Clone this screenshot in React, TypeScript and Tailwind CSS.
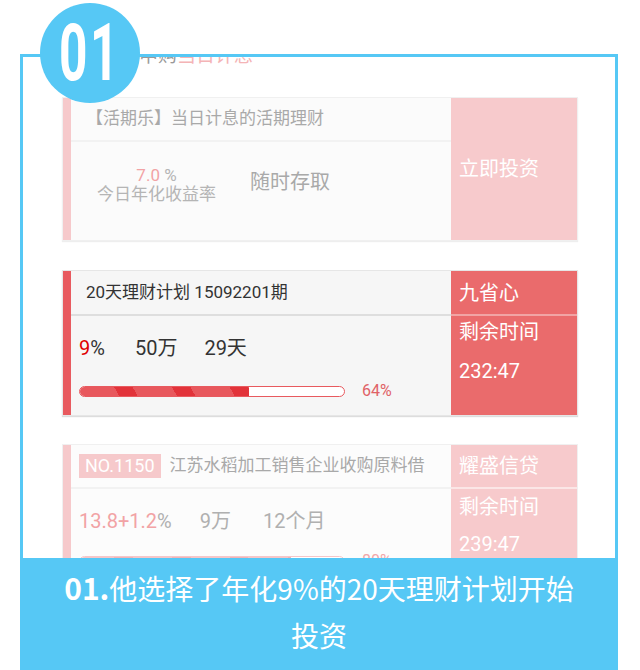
import React from 'react';

const font = { fontFamily: 'Roboto, "Noto Sans CJK SC", sans-serif' };

function Progress({ pct, tone }: { pct: number; tone: 'red' | 'pink' }) {
  const border = tone === 'red' ? 'border-[#e85a5f]' : 'border-[#f6c6c8]';
  const fill =
    tone === 'red'
      ? 'bg-[repeating-linear-gradient(60deg,#e8585d_0px,#e8585d_34px,#e2333a_34px,#e2333a_50px)]'
      : 'bg-[repeating-linear-gradient(60deg,#f6c6c8_0px,#f6c6c8_34px,#f2b4b7_34px,#f2b4b7_50px)]';
  return (
    <div className="flex items-center">
      <div className={`w-[266px] h-[11px] rounded-full border ${border} bg-white overflow-hidden`}>
        <div className={`h-full ${fill}`} style={{ width: `${pct}%` }} />
      </div>
      <span className={`ml-[17px] text-[16px] leading-none ${tone === 'red' ? 'text-[#e06266]' : 'text-[#f2a7a9]'}`}>
        {pct}%
      </span>
    </div>
  );
}

export default function App() {
  return (
    <div className="relative w-[640px] h-[670px] overflow-hidden bg-white flex flex-col" style={font}>
      <div className="h-[54px] shrink-0" />

      {/* frame */}
      <div className="mx-[20px] w-[598px] h-[504px] shrink-0 border-t-[3px] border-x-[3px] border-[#56c8f5] overflow-hidden">
        <div className="ml-[40px] mt-[-11px] h-[19px] text-[19px] leading-[19px] whitespace-nowrap">
          <span className="text-[#999]">支持随时申购</span>
          <span className="text-[#f4b4b6]">当日计息</span>
        </div>

        {/* card 1 */}
        <div className="ml-[39px] mt-[32px] w-[516px] h-[144px] flex border border-[#f0f0f0] shadow-[0_1px_1px_#eee]">
          <div className="w-[8px] bg-[#f6c9cb]" />
          <div className="w-[380px] bg-[#fbfbfb] flex flex-col">
            <div className="h-[44px] border-b-2 border-[#f2f2f2] flex items-center pl-[15px] text-[17px] text-[#a9a9a9]">
              【活期乐】当日计息的活期理财
            </div>
            <div className="flex-1 flex items-center">
              <div className="ml-[26px] flex flex-col items-center text-[17px] leading-[19px] text-[#b5b5b5] mt-[-12px]">
                <div>
                  <span className="text-[#f2a3a5]">7.0</span> %
                </div>
                <div className="whitespace-nowrap">今日年化收益率</div>
              </div>
              <div className="ml-[34px] text-[20px] text-[#a9a9a9] mt-[-18px]">随时存取</div>
            </div>
          </div>
          <div className="flex-1 bg-[#f7cacc] flex items-center pl-[8px] text-[20px] text-white">立即投资</div>
        </div>

        {/* card 2 */}
        <div className="ml-[39px] mt-[29px] w-[516px] h-[146px] flex border border-[#e6e6e6] shadow-[0_1px_1px_#ddd]">
          <div className="w-[8px] bg-[#e85a5f]" />
          <div className="w-[380px] bg-[#f6f6f6] flex flex-col">
            <div className="h-[45px] border-b-2 border-[#dedede] flex items-center pl-[15px] text-[17px] text-[#333]">
              20天理财计划 15092201期
            </div>
            <div className="flex-1 pl-[8px] pt-[20px]">
              <div className="flex items-center text-[20px] leading-[24px] text-[#333]">
                <span>
                  <span className="text-[#e00000]">9</span>%
                </span>
                <span className="ml-[30px]">50万</span>
                <span className="ml-[27px]">29天</span>
              </div>
              <div className="mt-[23px]">
                <Progress pct={64} tone="red" />
              </div>
            </div>
          </div>
          <div className="flex-1 bg-[#ea6b6c] flex flex-col text-[20px] text-white">
            <div className="h-[45px] border-b-2 border-[#f1a4a4] flex items-center pl-[8px]">九省心</div>
            <div className="pl-[8px] pt-[4px] leading-[24px]">剩余时间</div>
            <div className="pl-[8px] pt-[15px] leading-[24px]">232:47</div>
          </div>
        </div>

        {/* card 3 */}
        <div className="ml-[39px] mt-[28px] w-[516px] h-[146px] flex border border-[#f0f0f0]">
          <div className="w-[8px] bg-[#f6c9cb]" />
          <div className="w-[380px] bg-[#fcfcfc] flex flex-col">
            <div className="h-[44px] border-b-2 border-[#f2f2f2] flex items-center pl-[8px] text-[17px] text-[#a9a9a9] whitespace-nowrap">
              <span className="bg-[#f6c9cb] text-white px-[6px] h-[24px] leading-[24px] text-[18px]">NO.1150</span>
              <span className="ml-[9px]">江苏水稻加工销售企业收购原料借</span>
            </div>
            <div className="flex-1 pl-[8px] pt-[20px]">
              <div className="flex items-center text-[20px] leading-[24px] text-[#b0b0b0]">
                <span>
                  <span className="text-[#f2a3a5]">13.8+1.2</span>%
                </span>
                <span className="ml-[28px]">9万</span>
                <span className="ml-[32px]">12个月</span>
              </div>
              <div className="mt-[20px]">
                <Progress pct={80} tone="pink" />
              </div>
            </div>
          </div>
          <div className="flex-1 bg-[#f7cacc] flex flex-col text-[20px] text-white">
            <div className="h-[44px] border-b-2 border-[#fbe6e6] flex items-center pl-[8px]">耀盛信贷</div>
            <div className="pl-[8px] pt-[6px] leading-[24px]">剩余时间</div>
            <div className="pl-[8px] pt-[13px] leading-[24px]">239:47</div>
          </div>
        </div>
      </div>

      {/* caption */}
      <div
        className="mx-[20px] w-[598px] flex-1 bg-[#56c8f5] text-white text-center text-[28px] leading-[47px] pt-[6px]"
        style={{ fontFamily: '"Noto Sans CJK SC", sans-serif' }}
      >
        <div>
          <span className="font-bold text-[30px]">01.</span>他选择了年化9%的20天理财计划开始
        </div>
        <div>投资</div>
      </div>

      {/* number badge */}
      <div className="absolute left-[40px] top-[3px] w-[100px] h-[100px] rounded-full bg-[#56c8f5] flex items-center justify-center">
        <span
          className="text-white font-bold text-[80px] leading-none scale-x-[0.62] tracking-[4px]"
          style={{ fontFamily: 'Roboto, sans-serif' }}
        >
          01
        </span>
      </div>
    </div>
  );
}
